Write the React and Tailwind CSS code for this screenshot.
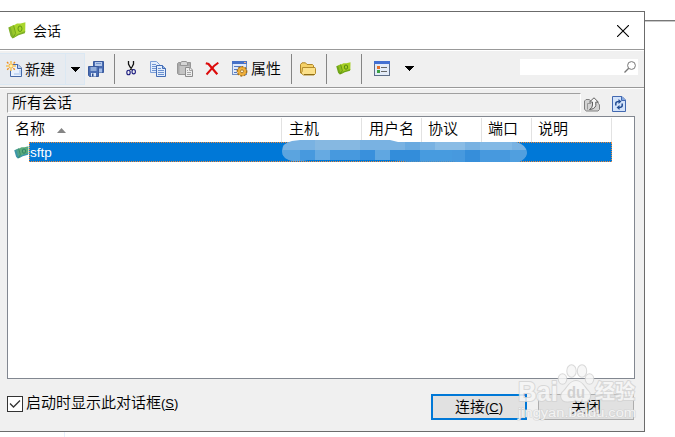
import React, { useState } from 'react';

const columns = [
  { name: '名称', width: 'w-[274px]', pad: 'pl-[7px]' },
  { name: '主机', width: 'w-[80px]', pad: 'pl-[7px]' },
  { name: '用户名', width: 'w-[60px]', pad: 'pl-[7px]' },
  { name: '协议', width: 'w-[60px]', pad: 'pl-[6px]' },
  { name: '端口', width: 'w-[50px]', pad: 'pl-[6px]' },
  { name: '说明', width: 'w-[80px]', pad: 'pl-[6px]' },
];

const LeafIcon = ({ className, light, mid, dark }) => (
  <svg className={className} viewBox="0 0 18 17" preserveAspectRatio="none">
    <path d="M0.3 5.5 L6 3 L8.5 14 L4.5 16.5 L2.5 14 Z" fill={mid} />
    <path d="M2.5 4.6 L6 3 L8 11 L5 14 Z" fill={light} fillOpacity="0.6" />
    <path d="M5.5 3.5 L9 1.6 L12.5 1.6 L17.4 0.3 L17.2 10.3 L10 12.6 L5 16.3 L7 12 Z" fill={light} />
    <path d="M5 16.3 L9 12.2 L17.2 9 L16.8 11.3 L10.5 13.3 Z" fill={mid} />
    <path d="M5.7 3.7 L7.7 11.5 L5.2 15.7" fill="none" stroke={dark} strokeWidth="0.7" />
    <ellipse cx="12" cy="6.7" rx="2" ry="2.8" fill={light} stroke={dark} strokeWidth="0.9" />
  </svg>
);

const NewIcon = () => (
  <svg className="size-4" viewBox="0 0 16 16">
    <path d="M5.5 3.5 H12 L15.5 7 V15.5 H4.5 V9" fill="#e8f1fd" stroke="#4569a8" />
    <path d="M11.5 3.5 V7.5 H15.5" fill="#b9d1f3" stroke="#4569a8" />
    <path d="M8 13 H14 V9" fill="none" stroke="#c4d8f4" strokeWidth="2" />
    <path d="M5 0 V10 M0 5 H10" stroke="#f2c35e" strokeWidth="1.6" />
    <path d="M1 1 L9 9 M9 1 L1 9" stroke="#ee8e1f" strokeWidth="1.4" strokeDasharray="2 1" />
    <rect x="3.5" y="3.5" width="3" height="3" fill="#fff3a4" />
  </svg>
);

const SaveAllIcon = () => (
  <svg className="size-4" viewBox="0 0 16 16">
    <path d="M5.5 0.5 H15.5 V11.5 H6.5 L5.5 10.5 Z" fill="#4a6db3" stroke="#3a5a9d" />
    <rect x="7" y="1" width="7" height="4" fill="#b5c9ea" />
    <path d="M8 2.5 H13" stroke="#7293cc" />
    <rect x="11" y="7.5" width="3" height="4" fill="#a5bee8" />
    <path d="M0.5 5.5 H10.5 V15.5 H1.5 L0.5 14.5 Z" fill="#4a6db3" stroke="#3a5a9d" />
    <rect x="2.5" y="6" width="6" height="4" fill="#91add9" />
    <rect x="3" y="12" width="5" height="3.5" fill="#dce8fa" />
    <rect x="4" y="12.5" width="1.5" height="3" fill="#2b4a8a" />
  </svg>
);

const CutIcon = () => (
  <svg className="h-[15px] w-[11px]" viewBox="0 0 11 15">
    <path d="M2.5 0 V3 L4 6 L6.5 9 M7.5 0 V3 L6 6 L4 9" fill="none" stroke="#111" strokeWidth="1.3" />
    <ellipse cx="2.5" cy="11.5" rx="1.7" ry="2.3" fill="none" stroke="#1c1c80" strokeWidth="1.1" />
    <ellipse cx="7.7" cy="10.7" rx="1.7" ry="2.2" fill="none" stroke="#1c1c80" strokeWidth="1.1" />
  </svg>
);

const CopyIcon = () => (
  <svg className="size-4" viewBox="0 0 16 16">
    <path d="M0.5 0.5 H6.5 L9.5 3.5 V11.5 H0.5 Z" fill="#e3edfb" stroke="#7d9fd8" />
    <path d="M2 3.5 H6 M2 5.5 H7 M2 7.5 H7 M2 9.5 H7" stroke="#7195d3" />
    <path d="M6.5 4.5 H12.5 L15.5 7.5 V15.5 H6.5 Z" fill="#e3edfb" stroke="#446db5" />
    <path d="M12.5 4.5 V7.5 H15.5" fill="#96b5e4" stroke="#446db5" />
    <path d="M8 7.5 H11 M8 9.5 H14 M8 11.5 H14 M8 13.5 H14" stroke="#6b91d0" />
  </svg>
);

const PasteIcon = () => (
  <svg className="size-4" viewBox="0 0 16 16">
    <path d="M1.5 1.5 H13.5 V13.5 H1.5 L0.5 12.5 V2.5 Z" fill="#a9a9a9" stroke="#969696" />
    <rect x="2.5" y="5" width="10" height="8" fill="#c4c4c4" />
    <path d="M3.5 4.5 V1.5 L5 0.5 H9 L10.5 1.5 V4.5 Z" fill="#d5d5d5" stroke="#969696" />
    <path d="M8.5 6.5 H13 L15.5 9 V15.5 H8.5 Z" fill="#eee" stroke="#8c8c8c" />
    <path d="M12.5 6.5 V9.5 H15.5 M10 9.5 H11 M10 11.5 H14 M10 13.5 H14" fill="none" stroke="#a5a5a5" />
  </svg>
);

const DeleteIcon = () => (
  <svg className="h-[14px] w-[14px]" viewBox="0 0 14 14">
    <path d="M0.8 1.2 L3.5 2 L12.3 12.3" fill="none" stroke="#dc0b0b" strokeWidth="2.2" />
    <path d="M13.3 0.7 L9 4 L1.5 12.5" fill="none" stroke="#dc0b0b" strokeWidth="1.9" />
  </svg>
);

const PropertiesIcon = () => (
  <svg className="size-4" viewBox="0 0 16 16">
    <rect x="0.5" y="0.5" width="14" height="13" fill="#dfe9fa" stroke="#7190c4" />
    <rect x="0" y="0" width="15" height="3" fill="#4671c8" />
    <rect x="12" y="1" width="2" height="1" fill="#f6b080" />
    <path d="M2 5.5 H9 M2 8.5 H6 M2 11.5 H5" stroke="#5578c0" />
    <circle cx="10" cy="10.3" r="4.6" fill="#e0a02b" stroke="#a5701d" strokeWidth="1.6" strokeDasharray="2 1.4" />
    <circle cx="10" cy="10.3" r="3.9" fill="#f0b03b" />
    <circle cx="10" cy="10.3" r="1.5" fill="#fff3cf" stroke="#94651d" strokeWidth="0.8" />
  </svg>
);

const FolderIcon = () => (
  <svg className="h-[14px] w-4" viewBox="0 0 16 14">
    <path d="M0.5 11 V2.5 L2 0.8 H5.5 L7 2.5 H12.5 L13.5 3.5 V6" fill="#f5d168" stroke="#b0862a" />
    <path d="M2.5 5.5 H15 L15.5 6.5 V11.5 L14 13 H3.5 L0.8 11 L2 10 Z" fill="#fbe08a" stroke="#b58d2c" />
    <path d="M4 12.5 H14.5" stroke="#8f6d14" />
  </svg>
);

const ListIcon = () => (
  <svg className="h-[15px] w-4" viewBox="0 0 16 15">
    <rect x="0.5" y="0.5" width="15" height="14" fill="#e3ebf8" stroke="#5d6d89" />
    <rect x="0" y="0" width="16" height="3" fill="#426fd2" />
    <rect x="3" y="5" width="3" height="3" fill="#e7702b" />
    <rect x="3" y="9" width="3" height="3" fill="#3aa043" />
    <path d="M7 6.5 H13 M7 10.5 H13" stroke="#666" />
  </svg>
);

const UpIcon = () => (
  <svg className="h-[15px] w-4" viewBox="0 0 16 15">
    <path d="M1.5 13.5 L0.5 12 V4 L2 2.5 H5 L6.5 3.5 H12.5 L14.5 6.5 L15.5 8 V12.5 L14 14 H2 Z" fill="#d4d4d4" stroke="#808080" />
    <path d="M3.5 12.5 V6.5 H7" fill="none" stroke="#999" />
    <path d="M5.5 5 L10 0.8 L14.3 5 H11.8 V8.5 Q11 12 5.5 12.5 Q8.5 11 8.5 8 V5 Z" fill="#f5f5f5" stroke="#606060" />
  </svg>
);

const RefreshIcon = () => (
  <svg className="h-4 w-[14px]" viewBox="0 0 14 16">
    <path d="M0.5 0.5 H10 L13.5 4 V15.5 H0.5 Z" fill="#d3e3fa" stroke="#4268b0" />
    <path d="M9.5 0.5 V4.5 H13.5" fill="#83a8e2" stroke="#4268b0" />
    <path d="M3.8 9.5 V7.5 Q3.8 5.5 7 5.5 M10.2 7.5 V9.5 Q10.2 11.5 7 11.5" fill="none" stroke="#234d94" strokeWidth="1.5" />
    <path d="M6.5 3 L9.5 5.5 L6.5 8 Z M7.5 9 L4.5 11.5 L7.5 14 Z" fill="#234d94" />
  </svg>
);

const Arrow = () => (
  <svg className="h-[5px] w-[9px]" viewBox="0 0 9 5" shapeRendering="crispEdges">
    <path d="M0 0 H9 L4.5 5 Z" fill="#000" />
  </svg>
);

const Separator = () => <div className="h-[30px] w-px bg-[#858585]" />;

const HostMask = () => (
  <svg className="absolute top-[-2px] left-[274px] h-[24px] w-[246px]" viewBox="0 0 246 24">
    <defs>
      <clipPath id="mask">
        <path d="M10 1 L18 0 H108 L116 2 H234 Q245 5 245 13 Q244 19 237 22 H174 L168 21.5 H126 L112 20 H26 L21 21 H11 Q0 19 0 11 Q0 3 10 1 Z" />
      </clipPath>
    </defs>
    <g clipPath="url(#mask)" shapeRendering="crispEdges">
      <rect width="246" height="10" fill="#79b2e2" />
      <rect y="10" width="246" height="14" fill="#4799de" />
      <rect x="33" width="45" height="10" fill="#86b8e1" />
      <rect x="123" width="15" height="10" fill="#6aaae0" />
      <rect x="153" width="30" height="10" fill="#8abce5" />
      <rect x="198" width="32" height="10" fill="#83b9e5" />
      <rect y="10" width="18" height="12" fill="#5ba4df" />
      <rect x="33" y="10" width="15" height="12" fill="#66aae2" />
      <rect x="78" y="10" width="15" height="12" fill="#3990dc" />
      <rect x="93" y="10" width="15" height="12" fill="#60a7e1" />
      <rect x="108" y="10" width="30" height="12" fill="#338dda" />
      <rect x="138" y="10" width="32" height="12" fill="#479bdf" />
      <rect x="183" y="10" width="15" height="14" fill="#368eda" />
      <rect x="228" y="10" width="18" height="14" fill="#509fdf" />
    </g>
  </svg>
);

const Watermark = () => (
  <div className="pointer-events-none absolute top-[363px] left-[517px] h-[60px] w-[122px]">
    <svg className="size-full" viewBox="0 0 122 60" fontFamily="'Liberation Sans', 'Noto Sans CJK SC', sans-serif">
      <g fill="#f6f6f6" stroke="#d3d3d3" strokeWidth="2" strokeLinejoin="round" paintOrder="stroke" opacity="0.85">
        <text x="1" y="38" fontSize="27" fontWeight="bold" textLength="40" lengthAdjust="spacingAndGlyphs">Bai</text>
        <ellipse cx="45.5" cy="16" rx="3.8" ry="4.8" />
        <ellipse cx="54.5" cy="8" rx="4.2" ry="5.8" />
        <ellipse cx="65" cy="8" rx="4.2" ry="5.8" />
        <ellipse cx="72.5" cy="16" rx="3.8" ry="4.8" />
        <path d="M59 18 C65 18 67 24 71 28 C75 32 73 39 67 38.5 C61 37.5 57 37.5 51 38.5 C44 39 42 32 47 28 C51 24 53 18 59 18 Z" />
        <text x="78" y="36" fontSize="20" fontWeight="bold" textLength="40" lengthAdjust="spacingAndGlyphs">经验</text>
      </g>
      <text x="50" y="35" fontSize="17" fontWeight="bold" fill="#d0d0d0" textLength="18" lengthAdjust="spacingAndGlyphs">du</text>
      <text x="1" y="54" fontSize="12" fill="#fafafa" fillOpacity="0.85" stroke="#cfcfcf" strokeWidth="1.2" strokeOpacity="0.7" paintOrder="stroke" textLength="118" lengthAdjust="spacingAndGlyphs">jingyan.baidu.com</text>
    </svg>
  </div>
);

const Toolbar = () => (
  <div className="flex h-[39px] items-center border-y border-[#999] shadow-[inset_0_1px_0_#fff]">
    <div className="mt-px flex h-[32px] w-[85px] items-center border border-l-0 border-[#dbe8f3] bg-[#e7ebf0]">
      <div className="flex h-full w-[66px] items-center border-r border-[#dbe8f3] pl-[6px]">
        <NewIcon />
        <span className="mt-px ml-[3px] whitespace-nowrap">新建</span>
      </div>
      <div className="ml-[5px]"><Arrow /></div>
    </div>
    <div className="ml-[3px]"><SaveAllIcon /></div>
    <div className="ml-[10px]"><Separator /></div>
    <div className="ml-[11px]"><CutIcon /></div>
    <div className="ml-[13px]"><CopyIcon /></div>
    <div className="ml-[11px]"><PasteIcon /></div>
    <div className="ml-[12px]"><DeleteIcon /></div>
    <div className="ml-[13px]"><PropertiesIcon /></div>
    <span className="mt-px ml-[3px] w-[30px] whitespace-nowrap">属性</span>
    <div className="ml-[10px]"><Separator /></div>
    <div className="ml-[8px]"><FolderIcon /></div>
    <div className="ml-[10px]"><Separator /></div>
    <div className="ml-[9px]">
      <LeafIcon className="h-[13px] w-[15px]" light="#a5ce22" mid="#6fa519" dark="#3b6f0c" />
    </div>
    <div className="ml-[10px]"><Separator /></div>
    <div className="ml-[12px]"><ListIcon /></div>
    <div className="ml-[15px]"><Arrow /></div>
    <div className="mr-[6px] mb-[4px] ml-auto flex h-[16px] w-[118px] items-center justify-end bg-white pr-[2px]">
      <svg className="h-[12px] w-[12px]" viewBox="0 0 12 12" fill="none" stroke="#777">
        <circle cx="7.5" cy="4.5" r="3.9" />
        <path d="M4.7 7.3 L0.5 11.5" strokeWidth="1.3" />
      </svg>
    </div>
  </div>
);

const App = () => {
  const [showOnStart, setShowOnStart] = useState(true);

  return (
    <div className="relative h-[437px] w-[675px] overflow-hidden bg-white font-['Liberation_Sans','Noto_Sans_CJK_SC',sans-serif] text-[15px] leading-[20px] font-[350] text-black">
      <div className="flex">
        <div className="mt-[11px] flex h-[421px] w-[645px] flex-col border border-l-0 border-[#6b6b6b] bg-[#f0f0f0]">
          <div className="flex h-[37px] items-center bg-white pr-[15px] pl-[8px]">
            <LeafIcon className="h-[17px] w-[18px]" light="#a9d62c" mid="#7fb028" dark="#5a9112" />
            <span className="ml-[7px] text-[14px]">会话</span>
            <svg className="ml-auto h-[12px] w-[12px]" viewBox="0 0 12 12">
              <path d="M0 0 L12 12 M12 0 L0 12" stroke="#000" strokeWidth="1.1" />
            </svg>
          </div>

          <Toolbar />

          <div className="flex h-[28px] items-start border-t border-white pt-[4px] pl-[7px]">
            <div className="flex h-[20px] w-[574px] items-center border border-t-[#a0a0a0] border-r-white border-b-white border-l-[#a0a0a0] pl-[4px]">
              所有会话
            </div>
            <div className="mt-[4px] ml-[3px]"><UpIcon /></div>
            <div className="mt-[3px] ml-[12px]"><RefreshIcon /></div>
          </div>

          <div className="ml-[7px] h-[263px] w-[628px] border border-[#828790] bg-white">
            <div className="flex h-[25px] pt-px">
              {columns.map((col, i) => (
                <div
                  key={col.name}
                  className={`flex shrink-0 items-center border-r border-[#e2e2e2] pb-[2px] ${col.width} ${col.pad}`}
                >
                  <span className="whitespace-nowrap">{col.name}</span>
                  {i === 0 && (
                    <svg className="mt-[2px] ml-[12px] h-[5px] w-[9px]" viewBox="0 0 9 5">
                      <path d="M0 5 H9 L4.5 0 Z" fill="#858585" />
                    </svg>
                  )}
                </div>
              ))}
            </div>
            <div className="relative flex h-[20px] items-center">
              <div className="w-[21px] pl-[6px]">
                <LeafIcon className="h-[13px] w-[15px]" light="#5cab7c" mid="#3d96a8" dark="#23775d" />
              </div>
              <div className="flex h-[20px] w-[583px] items-center border border-dotted border-[#f08a38] bg-[#0078d7] pt-px text-[13.5px] text-white">
                sftp
              </div>
              <HostMask />
            </div>
          </div>

          <div className="flex h-[52px] items-start pl-[7px]">
            <label className="mt-[14px] flex items-center">
              <input
                type="checkbox"
                className="sr-only"
                checked={showOnStart}
                onChange={(e) => setShowOnStart(e.target.checked)}
              />
              <span className="flex h-[16px] w-[16px] items-center justify-center border border-[#333] bg-white">
                {showOnStart && (
                  <svg className="h-[10px] w-[12px]" viewBox="0 0 12 10">
                    <path d="M1 4.5 L4.5 8 L11 1.5" fill="none" stroke="#333" strokeWidth="1.3" />
                  </svg>
                )}
              </span>
              <span className="ml-[3px] whitespace-nowrap">
                启动时显示此对话框<span className="text-[13px]">(<u>S</u>)</span>
              </span>
            </label>
            <button className="mt-[15px] ml-auto h-[26px] w-[96px] border-2 border-[#0078d7] bg-[#e1e1e1] leading-[20px]">
              连接<span className="text-[13px]">(<u>C</u>)</span>
            </button>
            <button className="mt-[15px] mr-[10px] ml-[11px] h-[26px] w-[96px] border border-[#adadad] bg-[#e1e1e1] pb-px leading-[20px]">
              关闭
            </button>
          </div>
        </div>
        <div className="mt-[20px] h-[2px] flex-1 border-t border-[#777] bg-[#c8c8c8]" />
      </div>
      <div className="ml-[64px] h-[5px] w-px bg-[#e7effc]" />
      <Watermark />
    </div>
  );
};

export default App;
